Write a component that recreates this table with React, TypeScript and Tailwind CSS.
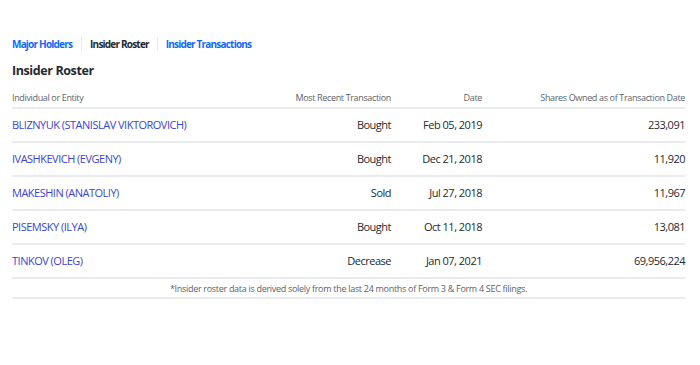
const rows = [
  { name: 'BLIZNYUK (STANISLAV VIKTOROVICH)', tx: 'Bought', date: 'Feb 05, 2019', shares: '233,091' },
  { name: 'IVASHKEVICH (EVGENY)', tx: 'Bought', date: 'Dec 21, 2018', shares: '11,920' },
  { name: 'MAKESHIN (ANATOLIY)', tx: 'Sold', date: 'Jul 27, 2018', shares: '11,967' },
  { name: 'PISEMSKY (ILYA)', tx: 'Bought', date: 'Oct 11, 2018', shares: '13,081' },
  { name: 'TINKOV (OLEG)', tx: 'Decrease', date: 'Jan 07, 2021', shares: '69,956,224' },
];

export default function App() {
  return (
    <div className="w-[700px] h-[365px] bg-white pl-3 pr-[15px] pt-[37px] font-['Open_Sans',sans-serif] text-[#232a31]">
      {/* tabs */}
      <div className="flex items-center text-[10px] font-bold leading-[14px] tracking-[-0.8px]">
        <a className="text-[#0f69ff] pr-[9px] border-r border-[#e6e9ed]">Major Holders</a>
        <span className="px-[8px] border-r border-[#e6e9ed] text-[#232a31]">Insider Roster</span>
        <a className="text-[#0f69ff] pl-[8px]">Insider Transactions</a>
      </div>

      <h3 className="mt-[10px] text-[12.5px] font-bold leading-[20px] tracking-[-0.4px]">Insider Roster</h3>

      <table className="mt-[9px] w-full border-collapse text-[11px] tracking-[-0.5px]">
        <thead>
          <tr className="border-b-2 border-[#e9ebee] text-[9px] text-[#5b636a] tracking-[-0.35px]">
            <th className="text-left font-normal leading-[15px] pb-[2px]">Individual or Entity</th>
            <th className="text-right font-normal leading-[15px] pb-[2px]">Most Recent Transaction</th>
            <th className="text-right font-normal leading-[15px] pb-[2px] w-[91px]">Date</th>
            <th className="text-right font-normal leading-[15px] pb-[2px] w-[203px]">Shares Owned as of Transaction Date</th>
          </tr>
        </thead>
        <tbody>
          {rows.map((r) => (
            <tr key={r.name} className="border-b-2 border-[#e9ebee] h-[34px]">
              <td className="text-left text-[#3c44d6]">{r.name}</td>
              <td className="text-right">{r.tx}</td>
              <td className="text-right">{r.date}</td>
              <td className="text-right">{r.shares}</td>
            </tr>
          ))}
          <tr className="border-b-2 border-[#e9ebee]">
            <td colSpan={4} className="text-center text-[9px] leading-[15px] tracking-[-0.3px] text-[#5b636a] py-[1.5px]">
              *Insider roster data is derived solely from the last 24 months of Form 3 &amp; Form 4 SEC filings.
            </td>
          </tr>
        </tbody>
      </table>
    </div>
  );
}
